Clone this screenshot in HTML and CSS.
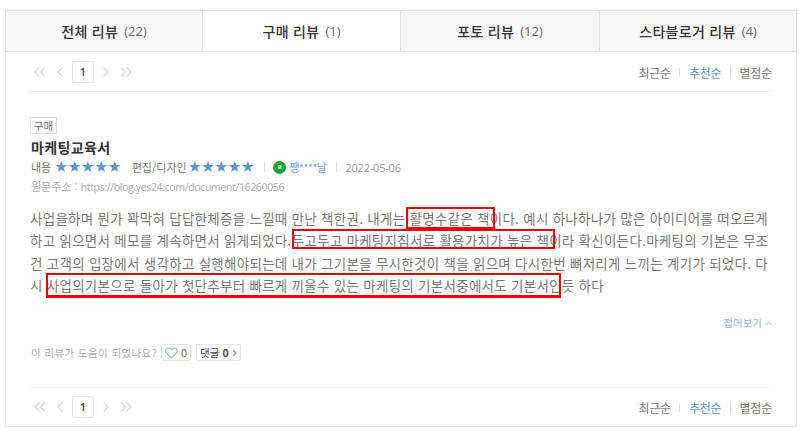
FILE: index.html
```html
<!DOCTYPE html>
<html lang="ko">
<head>
<meta charset="utf-8">
<title>리뷰</title>
<link rel="stylesheet" href="styles.css">
</head>
<body>
<div class="review-panel">
  <div class="tabs">
    <div class="tab"><b>전체 리뷰</b> <span>(22)</span></div>
    <div class="tab active"><b>구매 리뷰</b> <span>(1)</span></div>
    <div class="tab"><b>포토 리뷰</b> <span>(12)</span></div>
    <div class="tab"><b>스타블로거 리뷰</b> <span>(4)</span></div>
  </div>
  <div class="inner">
    <div class="pager-row">
      <div class="pager">
        <svg class="pg" width="14" height="12" viewBox="0 0 14 12"><path d="M6.5 1.5 2 6l4.500 4.500M12 1.500 7.500 6l4.500 4.500"/></svg>
        <svg class="pg prev" width="8" height="12" viewBox="0 0 8 12"><path d="M6.500 1.500 2 6l4.500 4.500"/></svg>
        <span class="page">1</span>
        <svg class="pg next" width="8" height="12" viewBox="0 0 8 12"><path d="M1.500 1.500 6 6l-4.500 4.500"/></svg>
        <svg class="pg" width="14" height="12" viewBox="0 0 14 12"><path d="M2 1.500 6.500 6 2 10.500M7.500 1.500 12 6l-4.500 4.500"/></svg>
      </div>
      <div class="sort"><span>최근순</span><i></i><span class="on">추천순</span><i></i><span>별점순</span></div>
    </div>
    <div class="review">
      <span class="tag">구매</span>
      <h3>마케팅교육서</h3>
      <div class="meta">
        <span>내용</span>
        <span class="stars">★★★★★</span>
        <span class="m2">편집/디자인</span>
        <span class="stars s-second">★★★★★</span>
        <i class="sep"></i>
        <span class="badge">R</span>
        <span class="nick">쨍****날</span>
        <i class="sep s2"></i>
        <span class="date">2022-05-06</span>
      </div>
      <div class="url">원문주소 : <span class="link">https://blog.yes24.com/document/16260056</span></div>
      <div class="body">
        <p>사업을하며 뭔가 꽉막혀 답답한체증을 느낄때 만난 책한권. 내게는 <span class="mark m-a">활명수같은 책</span>이다. 예시 하나하나가 많은 아이디어를 떠오르게</p>
        <p>하고 읽으면서 메모를 계속하면서 읽게되었다.<span class="mark m-b">두고두고 마케팅지침서로 활용가치가 높은 책</span>이라 확신이든다.마케팅의 기본은 무조</p>
        <p>건 고객의 입장에서 생각하고 실행해야되는데 내가 그기본을 무시한것이 책을 읽으며 다시한번 뼈저리게 느끼는 계기가 되었다. 다</p>
        <p>시 <span class="mark m-c">사업의기본으로 돌아가 첫단추부터 빠르게 끼울수 있는 마케팅의 기본서중에서도 기본서인</span>듯 하다</p>
      </div>
      <div class="fold">접어보기 <svg width="7" height="5" viewBox="0 0 7 5"><path d="M.5 4 3.500 1l3 3"/></svg></div>
      <div class="help">
        <span>이 리뷰가 도움이 되었나요?</span>
        <span class="btn"><svg width="13" height="12" viewBox="0 0 13 12"><path d="M6.500 11 1.600 6.200C.3 4.900.4 3 1.500 2S4.400.8 5.500 1.800l1 1 1-1C8.600.8 10.400 1 11.500 2s1.200 2.900-.1 4.200z"/></svg>0</span>
        <span class="btn reply">댓글 <b>0</b><svg width="5" height="8" viewBox="0 0 5 8"><path d="M1 1l3 3-3 3"/></svg></span>
      </div>
    </div>
    <div class="pager-row bottom">
      <div class="pager">
        <svg class="pg" width="14" height="12" viewBox="0 0 14 12"><path d="M6.5 1.5 2 6l4.500 4.500M12 1.500 7.500 6l4.500 4.500"/></svg>
        <svg class="pg prev" width="8" height="12" viewBox="0 0 8 12"><path d="M6.500 1.500 2 6l4.500 4.500"/></svg>
        <span class="page">1</span>
        <svg class="pg next" width="8" height="12" viewBox="0 0 8 12"><path d="M1.500 1.500 6 6l-4.500 4.500"/></svg>
        <svg class="pg" width="14" height="12" viewBox="0 0 14 12"><path d="M2 1.500 6.500 6 2 10.500M7.500 1.500 12 6l-4.500 4.500"/></svg>
      </div>
      <div class="sort"><span>최근순</span><i></i><span class="on">추천순</span><i></i><span>별점순</span></div>
    </div>
  </div>
</div>
</body>
</html>
```
FILE: styles.css
```css
* { box-sizing: border-box; }
html, body { margin: 0; background: #fff; }
body { width: 800px; height: 434px; overflow: hidden; padding: 10px 3px 0 5px; font-family: "Noto Sans CJK KR", "Noto Sans", sans-serif; color: #666; }
.review-panel { height: 417px; border: 1px solid #e2e2e2; }
.tabs { display: grid; grid-template-columns: 197px 198px 199px 1fr; height: 41px; border-bottom: 1px solid #e2e2e2; }
.tab { display: flex; align-items: center; justify-content: center; gap: 6px; background: #f7f7f7; border-right: 1px solid #e2e2e2; font-size: 14px; color: #333; }
.tab:last-child { border-right: 0; }
.tab.active { background: #fff; }
.tab b { font-weight: 500; letter-spacing: .3px; }
.tab span { color: #666; font-size: 13px; font-family: "Open Sans", sans-serif; }
.inner { padding: 0 24px; }
.pager-row { display: flex; justify-content: space-between; align-items: center; height: 40px; border-bottom: 1px solid #eee; }
.pager-row.bottom { border-bottom: 0; height: 38px; border-top: 1px solid #f2f2f2; }
.pager { display: flex; align-items: center; padding-left: 3px; }
.pg { fill: none; stroke: #dcdcdc; stroke-width: 1.600; }
.pg.prev { margin-left: 9px; margin-right: 8px; }
.pg.next { margin-left: 8px; margin-right: 9px; }
.page { width: 22px; height: 22px; border: 1px solid #e2e2e2; border-radius: 2px; display: flex; align-items: center; justify-content: center; font: 600 11px "Open Sans", sans-serif; color: #444; }
.sort { display: flex; align-items: center; font-size: 12px; color: #777; letter-spacing: -.2px; padding-top: 1px; }
.sort .on { color: #5b8fc7; }
.sort i { width: 1px; height: 9px; background: #ddd; margin: 0 8.500px; }
.review { position: relative; height: 295px; padding-top: 25px; }
.tag { display: block; width: 27px; height: 17px; border: 1px solid #ddd; font-size: 10.500px; line-height: 15px; text-align: center; color: #666; }
h3 { margin: 5px 0 0; padding-left: 1px; font-size: 14px; line-height: 17px; font-weight: 700; color: #333; letter-spacing: .35px; }
.meta { display: flex; align-items: center; height: 16px; margin-top: 3px; font-size: 11px; color: #777; white-space: nowrap; padding-left: 1px; }
.stars { color: #5f95cd; font: 15.500px/16px "DejaVu Sans", sans-serif; letter-spacing: -.6px; margin-left: 3px; }
.s-second { margin-left: 1px; margin-right: 2px; }
.m2 { margin-left: 11px; }
.sep { width: 1px; height: 10px; background: #ddd; margin: 0 8px 0 8px; }
.s2 { margin: 0 8px 0 10px; }
.badge { width: 13px; height: 13px; border-radius: 50%; background: #16a82e; color: #fff; font: 700 6px/13px "Open Sans", sans-serif; text-align: center; }
.nick { color: #6f9fd2; margin-left: 3px; letter-spacing: -.6px; }
.date { color: #999; font-family: "Open Sans", sans-serif; font-size: 11px; letter-spacing: -.2px; }
.url { margin-top: 3px; padding-left: 1px; font-size: 11px; line-height: 16px; color: #aaa; }
.link { font-family: "Open Sans", sans-serif; font-size: 10.500px; letter-spacing: -.35px; }
.body { margin-top: 12px; font-size: 13.500px; line-height: 22.400px; letter-spacing: .28px; color: #777; white-space: nowrap; }
.body p { margin: 0; }
.mark { position: relative; }
.mark::after { content: ""; position: absolute; border: 2px solid #ee0000; }
.m-a::after { left: -3px; right: -5px; top: -1px; bottom: -1px; }
.m-b::after { left: 0; right: -6px; top: -1px; bottom: 1px; }
.m-c::after { left: -1px; right: 1px; top: -2px; bottom: -3px; border-bottom-width: 3px; }
.fold { position: absolute; right: 0; top: 224px; display: flex; align-items: center; gap: 3px; font-size: 10.500px; line-height: 14px; color: #8cb2d9; }
.fold svg { fill: none; stroke: #8cb2d9; }
.help { position: absolute; left: 1px; top: 252px; display: flex; align-items: center; font-size: 10.500px; color: #aaa; letter-spacing: .4px; }
.btn { display: flex; align-items: center; height: 17px; margin-left: 4px; padding: 0 3px; border: 1px solid #e5e5e5; border-radius: 2px; color: #555; font-family: "Open Sans", sans-serif; letter-spacing: 0; }
.btn svg { fill: none; stroke: #8fb7e0; stroke-width: 1.100; margin-right: 3px; }
.reply { font-family: "Noto Sans CJK KR", sans-serif; font-size: 10.500px; color: #444; margin-left: 5px; }
.reply b { margin-left: 3px; font-weight: 600; }
.reply svg { stroke: #888; margin: 0 0 0 3px; }
```
